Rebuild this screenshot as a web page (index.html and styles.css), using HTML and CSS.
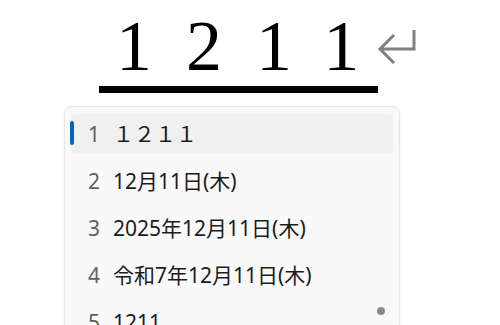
FILE: index.html
```html
<!DOCTYPE html>
<html lang="ja">
<head>
<meta charset="utf-8">
<title>IME</title>
<link rel="stylesheet" href="styles.css">
</head>
<body>
<div class="top">
  <div class="comp">1211</div>
  <svg class="enter" width="40" height="40" viewBox="0 0 40 40">
    <path d="M37 4 V23 H3 M17 9 L3 23 L17 37" fill="none" stroke="#808080" stroke-width="3"/>
  </svg>
</div>
<div class="cands">
  <div class="row sel"><span class="bar"></span><span class="num">1</span><span class="txt">１２１１</span></div>
  <div class="row"><span class="num">2</span><span class="txt">12月11日(木)</span></div>
  <div class="row"><span class="num">3</span><span class="txt">2025年12月11日(木)</span></div>
  <div class="row"><span class="num">4</span><span class="txt">令和7年12月11日(木)</span></div>
  <div class="row"><span class="num">5</span><span class="txt">1211</span></div>
  <span class="dot"></span>
</div>
</body>
</html>
```
FILE: styles.css
```css
html, body {
  margin: 0;
  padding: 0;
  background: #ffffff;
  overflow: hidden;
}
body {
  width: 500px;
  height: 325px;
}
.top {
  display: flex;
  align-items: flex-start;
  padding-left: 99px;
}
.comp {
  width: 279px;
  box-sizing: border-box;
  margin-top: 10px;
  padding-left: 17px;
  padding-bottom: 4px;
  border-bottom: 7px solid #000;
  font-family: "Liberation Serif", serif;
  font-size: 72px;
  line-height: 72px;
  letter-spacing: 34px;
  white-space: nowrap;
  color: #000;
}
.enter {
  display: block;
  margin-top: 26px;
  margin-left: -1px;
}
.cands {
  position: relative;
  margin-top: 13px;
  margin-left: 64px;
  width: 336px;
  height: 240px;
  box-sizing: border-box;
  border: 1px solid #e6e6e6;
  border-radius: 8px;
  background: #f9f9f9;
  box-shadow: 0 2px 6px rgba(0, 0, 0, 0.05);
  padding: 7px 6px 0 6px;
  display: flex;
  flex-direction: column;
  gap: 7px;
  overflow: hidden;
  font-family: "Noto Sans", "Noto Sans CJK JP", sans-serif;
  font-size: 21px;
}
.row {
  position: relative;
  display: flex;
  align-items: center;
  height: 40px;
  line-height: 40px;
  flex: none;
  border-radius: 5px;
}
.row.sel {
  background: #f0f0f0;
}
.bar {
  position: absolute;
  left: -1px;
  top: 7px;
  width: 4px;
  height: 24px;
  border-radius: 2px;
  background: #0067c0;
}
.num {
  width: 25px;
  padding-left: 17px;
  color: #616161;
}
.txt {
  color: #1b1b1b;
  white-space: nowrap;
}
.dot {
  position: absolute;
  right: 14px;
  top: 200px;
  width: 8px;
  height: 8px;
  border-radius: 50%;
  background: #8b8b8b;
}
```
